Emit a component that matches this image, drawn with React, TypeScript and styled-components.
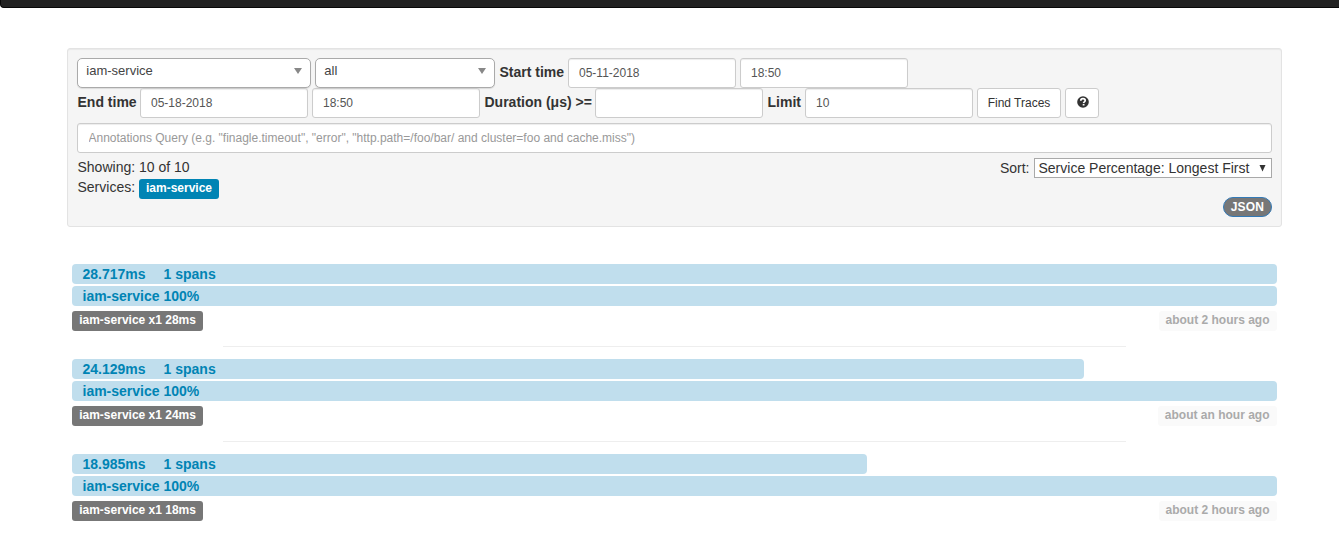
import React from "react";
import styled, { createGlobalStyle } from "styled-components";

const GlobalStyle = createGlobalStyle`
  *, *::before, *::after { box-sizing: border-box; }
  html, body { margin: 0; height: 533px; overflow: hidden; background: #fff; }
  body {
    font: 14px/20px "Liberation Sans", Arial, Helvetica, sans-serif;
    color: #333;
  }
`;

const Navbar = styled.nav`
  height: 8px;
  background: #222;
  border: solid #080808;
  border-width: 0 0 1px 1px;
  border-radius: 0 0 0 4px;
`;

const Page = styled.main`
  width: 1215px;
  margin: 40px 0 0 67px;
`;

const SearchPanel = styled.section`
  height: 179px;
  padding: 9px;
  background: #f5f5f5;
  border: 1px solid #e3e3e3;
  border-radius: 3px;
  box-shadow: inset 0 1px 1px rgba(0, 0, 0, 0.05);
`;

const FieldRow = styled.div`
  display: flex;
  height: 30px;
`;

const Chosen = styled.div<{ $width: number }>`
  display: flex;
  align-items: center;
  justify-content: space-between;
  flex: none;
  width: ${(p) => p.$width}px;
  height: 30px;
  margin-right: 4px;
  padding: 0 8.5px 4px 8.3px;
  border: 1px solid #aaa;
  border-radius: 5px;
  background: #fff;
  box-shadow: 0 1px 1px rgba(0, 0, 0, 0.1);
  font-size: 13px;
  color: #444;
`;

const Arrow = styled.span`
  border: solid transparent;
  border-width: 6px 4px 0;
  border-top-color: #888;
`;

const FieldLabel = styled.label<{ $width: number }>`
  flex: none;
  width: ${(p) => p.$width}px;
  padding: 4px 0 0 0.5px;
  font-weight: 700;
  white-space: nowrap;
`;

const TextInput = styled.input<{ $wide?: boolean }>`
  display: block;
  flex: none;
  width: ${(p) => (p.$wide ? "100%" : "168px")};
  height: 30px;
  margin: ${(p) => (p.$wide ? "5px 0 0" : "0 4px 0 0")};
  padding: 5px 10px 5px ${(p) => (p.$wide ? "10.5px" : "10px")};
  border: 1px solid #ccc;
  border-radius: 3px;
  background: #fff;
  box-shadow: inset 0 1px 1px rgba(0, 0, 0, 0.075);
  color: #555;
  font: 12px/18px "Liberation Sans", Arial, sans-serif;
  &::placeholder { color: #999; }
`;

const Button = styled.button<{ $width: number }>`
  display: flex;
  align-items: center;
  justify-content: center;
  flex: none;
  width: ${(p) => p.$width}px;
  height: 30px;
  margin-right: 4px;
  padding: 0;
  border: 1px solid #ccc;
  border-radius: 3px;
  background: #fff;
  color: #333;
  font: 12px/18px "Liberation Sans", Arial, sans-serif;
`;

const Summary = styled.div`
  display: flex;
  justify-content: space-between;
  padding-top: 4px;
`;

const SummaryLine = styled.div`
  display: flex;
  height: 20px;
  padding-left: 0.5px;
`;

const Badge = styled.span<{ $tone: "service" | "count" | "time" }>`
  display: block;
  height: 20px;
  padding: ${(p) => (p.$tone === "time" ? "0 7.5px 0 6.5px" : "0 6.8px 0 7.2px")};
  border-radius: 3px;
  font-size: 12px;
  line-height: 18px;
  font-weight: 700;
  white-space: nowrap;
  color: ${(p) => (p.$tone === "time" ? "#aaa" : "#fff")};
  background: ${(p) => ({ service: "#0084b4", count: "#777", time: "#fafafa" })[p.$tone]};
`;

const ServiceSlot = styled.div`
  padding: 2px 0 0 3.7px;
`;

const Actions = styled.div`
  display: flex;
  flex-direction: column;
  align-items: flex-end;
`;

const SortRow = styled.div`
  display: flex;
  gap: 4.5px;
  padding-top: 1px;
`;

const SortSelect = styled.div`
  display: flex;
  align-items: center;
  justify-content: space-between;
  width: 238px;
  height: 20px;
  padding: 0 5px 0 3.5px;
  border: 1px solid #a9a9a9;
  background: #fff;
  white-space: nowrap;
`;

const JsonPill = styled.span`
  width: 49px;
  height: 20px;
  margin-top: 19px;
  border: 1px solid #337ab7;
  border-radius: 10px;
  background: #777;
  color: #fff;
  font-size: 12px;
  line-height: 18px;
  font-weight: 700;
  text-align: center;
  letter-spacing: 0.2px;
`;

const TraceList = styled.ul`
  margin: 37px 5px 0;
  padding: 0;
  list-style: none;
`;

const Trace = styled.li`
  height: 82px;
  & + & { height: 95px; }
  & + &::before {
    content: "";
    display: block;
    width: 903px;
    height: 1px;
    margin: 0 0 12px 151px;
    background: #eee;
  }
`;

const Bar = styled.div`
  height: 20px;
  margin-bottom: 2px;
  padding-left: 10.5px;
  border-radius: 4px;
  background: #c0deed;
  color: #0084b4;
  font-weight: 700;
  white-space: nowrap;
`;

const SpanCount = styled.span`
  margin-left: 18px;
`;

const TraceFooter = styled.div`
  display: flex;
  justify-content: space-between;
  padding-top: 3px;
`;

const HelpGlyph = styled.svg`
  display: block;
  margin: 0 0 2px 1px;
`;

const traces = [
  { duration: "28.717ms", width: 100, count: "28ms", age: "about 2 hours ago" },
  { duration: "24.129ms", width: 84, count: "24ms", age: "about an hour ago" },
  { duration: "18.985ms", width: 66, count: "18ms", age: "about 2 hours ago" },
];

function QuestionIcon() {
  return (
    <HelpGlyph width="12" height="12" viewBox="0 0 12 12">
      <circle cx="6" cy="6" r="5.8" fill="#333" />
      <path d="M3.8 4.7C3.8 3.2 4.7 2.7 6 2.7s2.2.6 2.2 1.7c0 1.4-1.6 1.4-1.6 2.6" fill="none" stroke="#fff" strokeWidth="1.7" />
      <path d="M5.7 7.9h1.8v1.6H5.7z" fill="#fff" />
    </HelpGlyph>
  );
}

function SortArrow() {
  return (
    <svg width="7" height="9" viewBox="0 0 7 9">
      <path d="M.5 1h6L3.5 7.5z" fill="#333" />
    </svg>
  );
}

export default function App() {
  return (
    <>
      <GlobalStyle />
      <Navbar />
      <Page>
        <SearchPanel>
          <FieldRow>
            <Chosen $width={234}>iam-service<Arrow /></Chosen>
            <Chosen $width={180}>all<Arrow /></Chosen>
            <FieldLabel $width={69}>Start time</FieldLabel>
            <TextInput defaultValue="05-11-2018" />
            <TextInput defaultValue="18:50" />
          </FieldRow>
          <FieldRow>
            <FieldLabel $width={63}>End time</FieldLabel>
            <TextInput defaultValue="05-18-2018" />
            <TextInput defaultValue="18:50" />
            <FieldLabel $width={111}>Duration (μs) &gt;=</FieldLabel>
            <TextInput />
            <FieldLabel $width={38}>Limit</FieldLabel>
            <TextInput defaultValue="10" />
            <Button $width={84}>Find Traces</Button>
            <Button $width={34} aria-label="Help"><QuestionIcon /></Button>
          </FieldRow>
          <TextInput
            $wide
            placeholder={'Annotations Query (e.g. "finagle.timeout", "error", "http.path=/foo/bar/ and cluster=foo and cache.miss")'}
          />
          <Summary>
            <div>
              <SummaryLine>Showing: 10 of 10</SummaryLine>
              <SummaryLine>
                Services:
                <ServiceSlot><Badge $tone="service">iam-service</Badge></ServiceSlot>
              </SummaryLine>
            </div>
            <Actions>
              <SortRow>
                Sort:
                <SortSelect>Service Percentage: Longest First<SortArrow /></SortSelect>
              </SortRow>
              <JsonPill>JSON</JsonPill>
            </Actions>
          </Summary>
        </SearchPanel>
        <TraceList>
          {traces.map((t) => (
            <Trace key={t.duration}>
              <Bar style={{ width: `${t.width}%` }}>
                {t.duration}<SpanCount>1 spans</SpanCount>
              </Bar>
              <Bar>iam-service 100%</Bar>
              <TraceFooter>
                <Badge $tone="count">iam-service x1 {t.count}</Badge>
                <Badge $tone="time">{t.age}</Badge>
              </TraceFooter>
            </Trace>
          ))}
        </TraceList>
      </Page>
    </>
  );
}
